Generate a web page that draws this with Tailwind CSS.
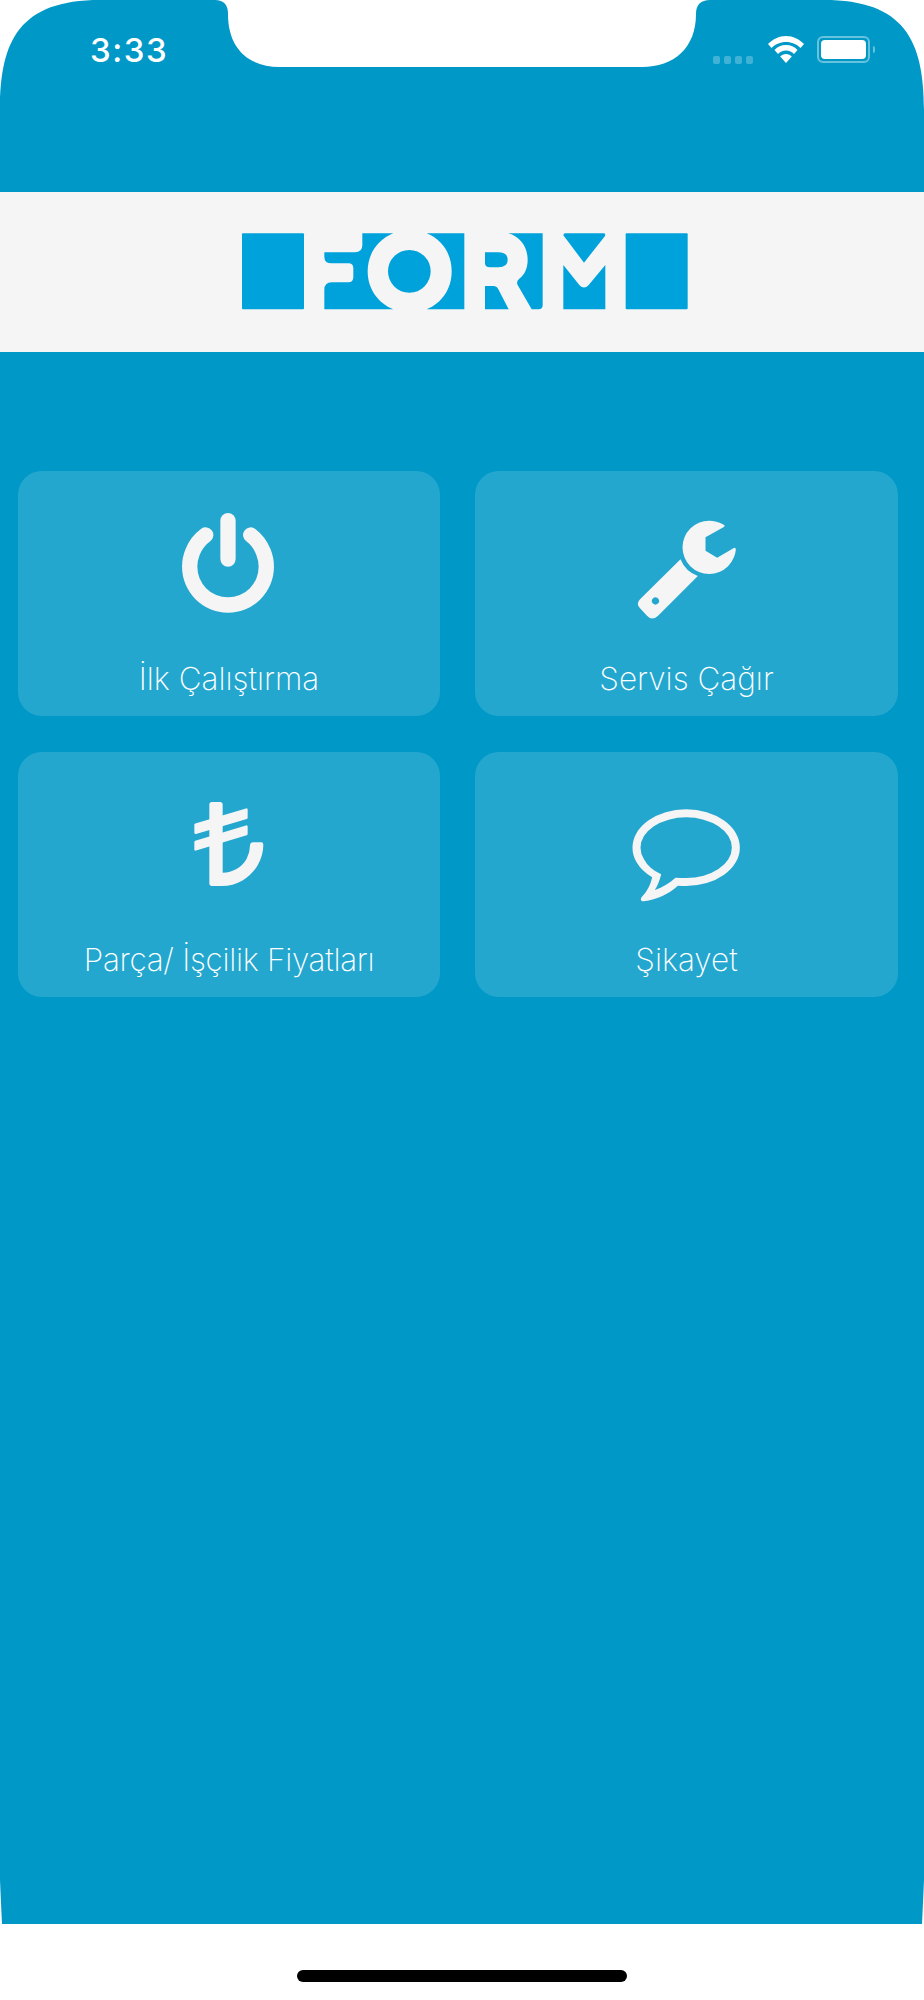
<!DOCTYPE html>
<html lang="tr">
  <head>
    <meta charset="UTF-8" />
    <meta name="viewport" content="width=device-width, initial-scale=1.0" />
    <title>Form</title>
    <script src="https://cdn.jsdelivr.net/npm/@tailwindcss/browser@4"></script>
  </head>
  <body class="bg-white font-['Inter',sans-serif]">
    <div class="relative w-[924px] h-[2000px] bg-white overflow-hidden">
      <div class="relative h-[1924px] bg-[#0099c7]">
        <!-- status bar -->
        <div class="h-[192px] pt-[36px] pl-[90px] pr-[49px]">
          <div class="flex items-start justify-between">
            <span class="text-[33px] leading-[28px] tracking-[1.5px] font-medium text-white">3:33</span>
            <div class="flex items-start">
              <div class="flex gap-[3.5px] mt-[20px] mr-[15px]">
                <span class="w-[7.5px] h-[7.5px] rounded-[2px] bg-white/25"></span>
                <span class="w-[7.5px] h-[7.5px] rounded-[2px] bg-white/25"></span>
                <span class="w-[7.5px] h-[7.5px] rounded-[2px] bg-white/25"></span>
                <span class="w-[7.5px] h-[7.5px] rounded-[2px] bg-white/25"></span>
              </div>
              <svg class="w-[36px] h-[27px] mr-[13px]" viewBox="0 0 36 27" fill="white">
                <path d="M18 0C11 0 5 3 0 8l3.5 4C7 8.5 12 6 18 6s11 2.5 14.5 6L36 8C31 3 25 0 18 0z" />
                <path d="M18 9c-4.5 0-8.5 1.8-11.5 5l3.5 4c2-2.2 4.8-3.5 8-3.5s6 1.3 8 3.5l3.5-4c-3-3.2-7-5-11.5-5z" />
                <path d="M18 18c-2.3 0-4.3 1-5.8 2.5L18 27l5.8-6.5C22.3 19 20.3 18 18 18z" />
              </svg>
              <div class="flex items-center">
                <div class="w-[53px] h-[27px] rounded-[6px] border-2 border-white/40 p-[2px]">
                  <div class="h-full rounded-[4px] bg-white"></div>
                </div>
                <span class="w-[2.5px] h-[7px] ml-[2.5px] rounded-r-[2px] bg-white/40"></span>
              </div>
            </div>
          </div>
        </div>

        <!-- logo -->
        <div class="flex justify-center h-[160px] pr-[4px] bg-[#f5f5f5]">
          <svg class="w-[480px] h-[160px]" viewBox="0 -54 1440 480" fill="#00a2dc" fill-rule="evenodd">
            <rect x="66" y="70" width="186" height="228" rx="3" />
            <rect x="1217" y="70" width="186" height="228" rx="3" />
            <path d="M427 70H520C475 88 443 130 443 184C443 238 475 280 520 298H313V240Q313 217 335 217H385Q400 217 400 202V175Q400 160 385 160H335Q313 160 313 140V127H405Q427 127 427 105Z" />
            <path d="M504 184A64 64 0 0 1 522.7 138.7A64 64 0 0 1 568 120A64 64 0 0 1 613.3 138.7A64 64 0 0 1 632 184A64 64 0 0 1 613.3 229.3A64 64 0 0 1 568 248A64 64 0 0 1 522.7 229.3A64 64 0 0 1 504 184Z" />
            <path d="M620 70H733V298H620C665 280 695 238 695 184C695 130 665 88 620 70Z" />
            <path d="M795 127H835Q863 127 863 150Q863 172 835 172H810Q795 172 795 160Z" />
            <path d="M795 228H820Q830 228 835 238L866 298H795Z" />
            <path d="M865 70H968V285Q968 298 955 298H935L893 225Q888 215 897 207C915 195 923 172 923 150C923 110 900 80 865 70Z" />
            <path d="M1030 76Q1030 70 1036 70H1150Q1158 70 1155 78L1092 158Z" />
            <path d="M1030 165L1078 225Q1092 240 1106 225L1156 165V298H1030Z" />
          </svg>
        </div>

        <!-- menu -->
        <div class="grid grid-cols-[422px_423px] gap-x-[35px] gap-y-[36px] pl-[18px] pt-[119px]">
          <div class="flex flex-col items-center h-[245px] pt-[30px] rounded-[24px] bg-white/14">
            <svg class="w-[120px] h-[120px]" viewBox="0 0 120 120" fill="none" stroke="#f5f5f5" stroke-width="15.3" stroke-linecap="round">
              <path d="M36.7 34A38.3 38.3 0 0 0 23.6 51A38.3 38.3 0 0 0 20.7 65.7A38.3 38.3 0 0 0 23.6 80.4A38.3 38.3 0 0 0 31.9 92.8A38.3 38.3 0 0 0 44.3 101.1A38.3 38.3 0 0 0 59 104A38.3 38.3 0 0 0 73.7 101.1A38.3 38.3 0 0 0 86.1 92.8A38.3 38.3 0 0 0 94.4 80.4A38.3 38.3 0 0 0 97.3 65.7A38.3 38.3 0 0 0 94.4 51A38.3 38.3 0 0 0 81.7 34" />
              <path d="M59 19.7V58" />
            </svg>
            <span class="mt-[38px] text-[31.5px] leading-[40px] font-extralight text-white">İlk Çalıştırma</span>
          </div>

          <div class="flex flex-col items-center h-[245px] pt-[30px] rounded-[24px] bg-white/14">
            <svg class="w-[120px] h-[120px]" viewBox="499.5 123 360 360" fill="#f5f5f5" fill-rule="evenodd">
              <path d="M790 201L735 232V272L770 293L820 264Q826 262 826 270A80 80 0 0 1 819.9 292.6A80 80 0 0 1 802.6 318.6A80 80 0 0 1 776.6 335.9A80 80 0 0 1 746 342A80 80 0 0 1 715.4 335.9A80 80 0 0 1 689.4 318.6A80 80 0 0 1 672.1 292.6A80 80 0 0 1 666 262A80 80 0 0 1 672.1 231.4A80 80 0 0 1 689.4 205.4A80 80 0 0 1 715.4 188.1A80 80 0 0 1 746 182A80 80 0 0 1 787 193Q796 197 790 201Z" />
              <path d="M660 298L540 416Q525 430 538 444L558 466Q573 484 592 468L712 348Q675 335 660 298ZM585 412A11 11 0 1 1 584.9 412Z" />
            </svg>
            <span class="mt-[38px] text-[31.5px] leading-[40px] font-extralight text-white">Servis Çağır</span>
          </div>

          <div class="flex flex-col items-center h-[245px] pt-[30px] rounded-[24px] bg-white/14">
            <svg class="w-[120px] h-[120px]" viewBox="507 126 360 360" fill="#f5f5f5">
              <path d="M636 186H660Q668 186 668 194V398A83 83 0 0 0 709.5 387A83 83 0 0 0 740 356A83 83 0 0 0 750 315Q751 307 758 307H784Q790 307 790 314A125 125 0 0 1 773 375.5A125 125 0 0 1 727.5 421.3A125 125 0 0 1 665 438H636Q628 438 628 430V194Q628 186 636 186Z" />
              <path d="M587 254L739 209V233L587 278Z" stroke="#f5f5f5" stroke-width="8" stroke-linejoin="round" />
              <path d="M587 306L739 260V282L587 328Z" stroke="#f5f5f5" stroke-width="8" stroke-linejoin="round" />
            </svg>
            <span class="mt-[38px] text-[31.5px] leading-[40px] tracking-[-0.3px] font-extralight text-white">Parça/ İşçilik Fiyatları</span>
          </div>

          <div class="flex flex-col items-center h-[245px] pt-[30px] rounded-[24px] bg-white/14">
            <svg class="w-[120px] h-[120px]" viewBox="499.5 126 360 360" fill="#f5f5f5" fill-rule="evenodd">
              <path d="M575 412A161 115 0 0 1 528.3 367A161 115 0 0 1 516 323A161 115 0 0 1 528.3 279A161 115 0 0 1 563.2 241.7A161 115 0 0 1 615.4 216.8A161 115 0 0 1 677 208A161 115 0 0 1 738.6 216.8A161 115 0 0 1 790.8 241.7A161 115 0 0 1 825.7 279A161 115 0 0 1 838 323A161 115 0 0 1 825.7 367A161 115 0 0 1 790.8 404.3A161 115 0 0 1 738.6 429.2A161 115 0 0 1 677 438Q664 438 652 437C625 462 590 478 550 484Q538 484 542 473C560 455 570 435 575 412ZM602 403A137 91 0 0 1 550.4 357.8A137 91 0 0 1 540 323A137 91 0 0 1 550.4 288.2A137 91 0 0 1 580.1 258.7A137 91 0 0 1 624.6 238.9A137 91 0 0 1 677 232A137 91 0 0 1 729.4 238.9A137 91 0 0 1 773.9 258.7A137 91 0 0 1 803.6 288.2A137 91 0 0 1 814 323A137 91 0 0 1 803.6 357.8A137 91 0 0 1 773.9 387.3A137 91 0 0 1 729.4 407.1A137 91 0 0 1 677 414Q660 414 645 413C628 428 607 442 583 450C592 437 598 420 602 403Z" />
            </svg>
            <span class="mt-[38px] text-[31.5px] leading-[40px] font-extralight text-white">Şikayet</span>
          </div>
        </div>

        <!-- screen corners and notch -->
        <svg class="absolute left-0 top-0 w-[924px] h-[110px]" viewBox="0 0 924 110" fill="white">
          <path d="M0 110C0 40 20 0 100 0H0Z" />
          <path d="M924 110C924 40 904 0 824 0H924Z" />
          <path d="M215 0Q228 0 228 14C228 48 248 67 280 67H642C674 67 696 48 696 14Q696 0 710 0Z" />
        </svg>
        <svg class="absolute left-0 bottom-0 w-[924px] h-[44px]" viewBox="0 0 924 44" fill="white">
          <path d="M0 0Q1 24 2 44H0Z" />
          <path d="M924 0Q923 24 922 44H924Z" />
        </svg>
      </div>

      <!-- home indicator -->
      <div class="w-[330px] h-[12px] mt-[46px] mx-auto rounded-full bg-black"></div>
    </div>
  </body>
</html>
